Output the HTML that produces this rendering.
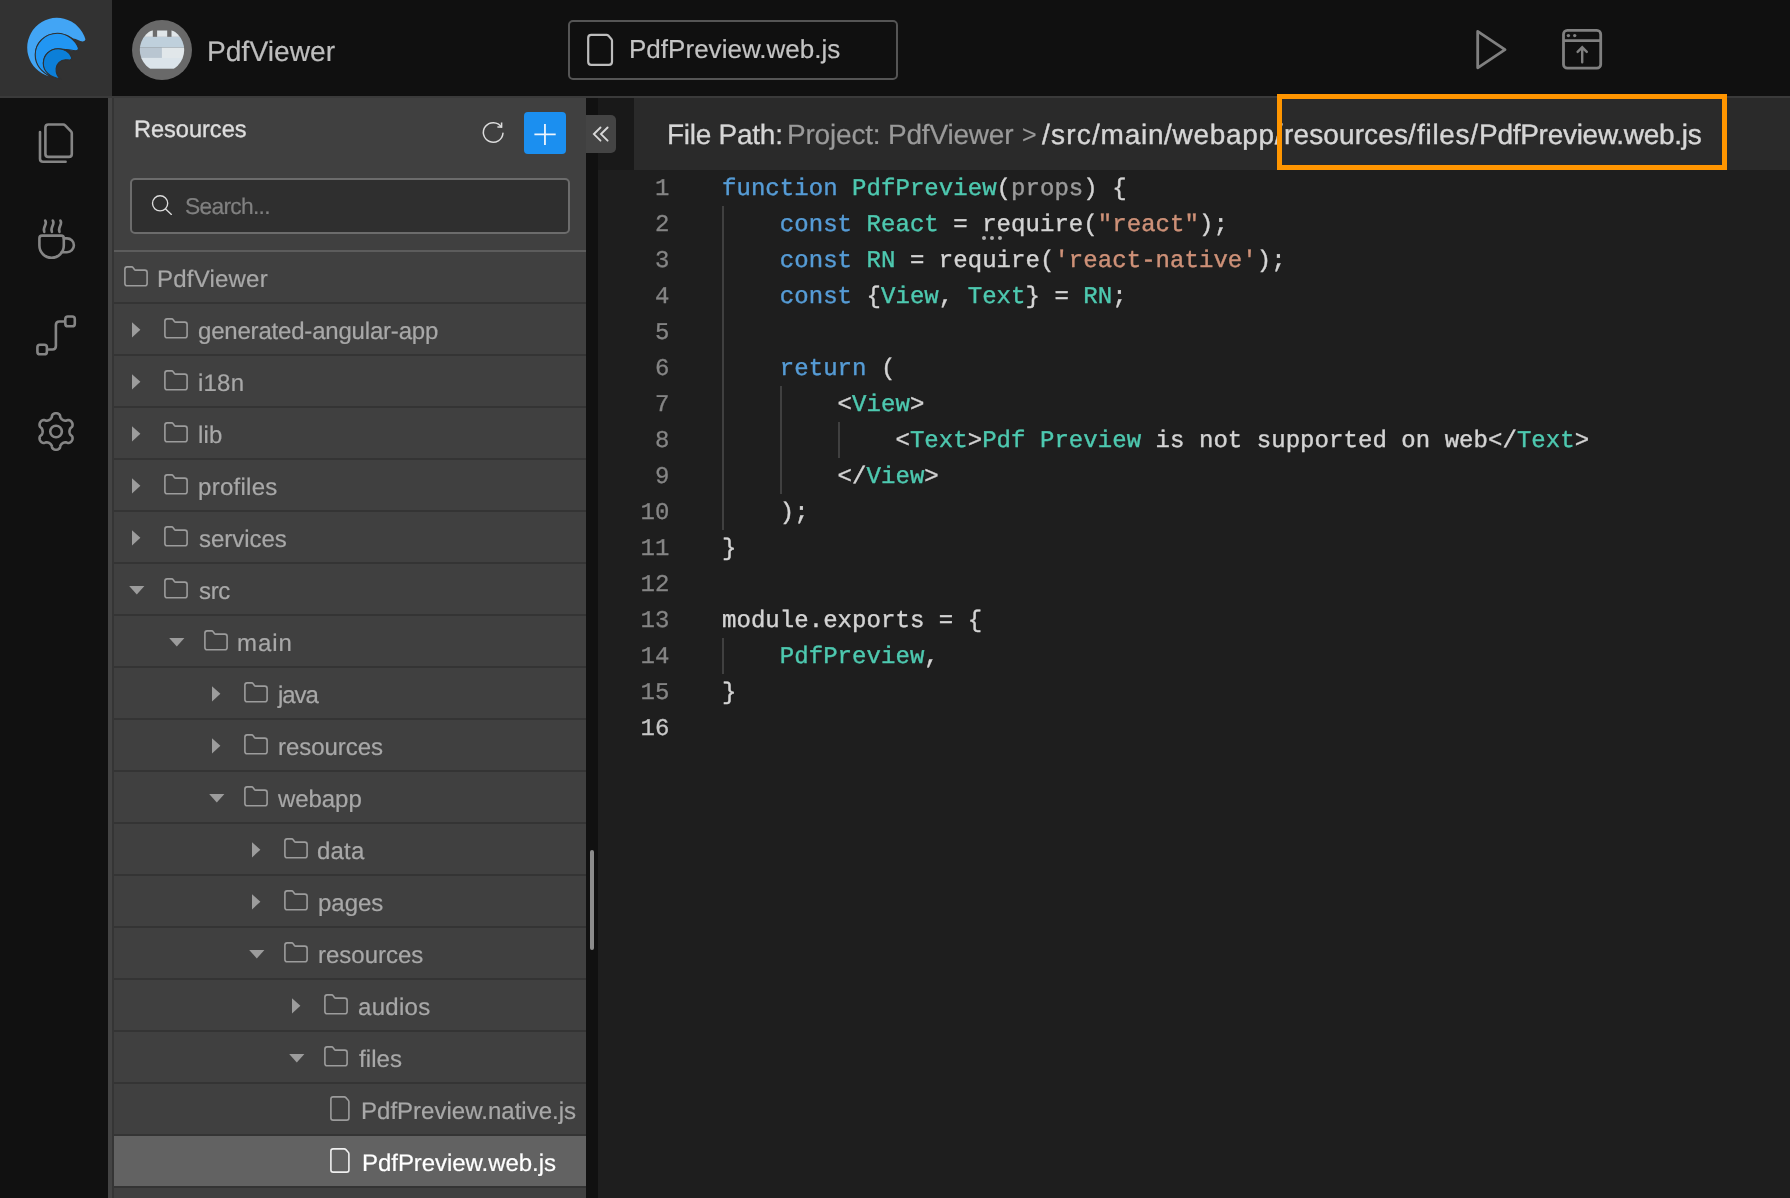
<!DOCTYPE html>
<html><head><meta charset="utf-8"><title>PdfViewer</title><style>
*{margin:0;padding:0;box-sizing:border-box}
html,body{width:1790px;height:1198px;overflow:hidden;background:#101010}
body{position:relative;font-family:"Liberation Sans",sans-serif;-webkit-font-smoothing:antialiased;text-rendering:geometricPrecision}
.tt,.ln,.cl,.fp,.tx{will-change:transform}
.ab{position:absolute;display:block}
.sep{left:114px;width:472px;height:2px;background:#343434}
.tt{font-size:24px;line-height:56px;height:50px;white-space:nowrap;-webkit-text-stroke:0.2px currentColor}
.ln{left:598px;width:71.5px;text-align:right;font-family:"Liberation Mono",monospace;font-size:24px;height:36px;line-height:33px;padding-top:3px;color:#858585;letter-spacing:0.05px;-webkit-text-stroke:0.3px currentColor}
.ln.act{color:#c6c6c6}
.cl{left:722px;font-family:"Liberation Mono",monospace;font-size:24px;height:36px;line-height:33px;padding-top:3px;color:#d4d4d4;white-space:pre;letter-spacing:0.05px;-webkit-text-stroke:0.4px currentColor}
.k{color:#569cd6}.t{color:#4ec9b0}.s{color:#ce9178}.g{color:#9b9b9b}
.fp{-webkit-text-stroke:0.2px currentColor;font-size:28px;line-height:72px;height:72px;white-space:nowrap;top:99px}
</style></head><body>
<div class="ab" style="left:0;top:0;width:1790px;height:96px;background:#101010"></div>
<div class="ab" style="left:0;top:96px;width:1790px;height:2px;background:#3a3a3a"></div>
<div class="ab" style="left:0;top:0;width:112px;height:96px;background:#323232"></div>
<svg class="ab" style="left:0;top:0" width="112" height="96" viewBox="0 0 112 96">
<path d="M85.4 39.2 A29.7 29.7 0 1 0 49 76.2 C40 70 35 62 35 54.7 C35 42 45 33 57.4 33.2 C64 33.2 69 35.5 73.4 38.4 C76.4 38.6 80 41.6 83 41.4 C84.4 41.3 85.5 40.4 85.4 39.2 Z" fill="#42a5f5"/>
<path d="M78.4 48.2 C76 40.3 67 33.2 57.4 33.2 C45 33.2 35.2 43 35.2 54.7 C35.2 64 41 72.4 53 77.6 C45 72 43 66 43.4 62.8 C43.4 55 50 48.7 58.1 48.7 C61 48.7 63.5 49.2 65.4 49.6 C68.4 48.9 72 51 76 50.8 C77.6 50.7 78.6 49.5 78.4 48.2 Z" fill="#2196f3" stroke="#303030" stroke-width="1.1"/>
<path d="M71.6 57.5 C70 52.3 64 48.7 58.1 48.7 C50 48.7 43.3 55 43.3 63.4 C43.3 70.4 49 77.3 60.2 78.8 C57 76 55.9 72 56.1 68.5 C56.5 63.4 60.6 60 65.4 59.7 C67 59.6 68.6 60.1 69.9 60 C71 59.9 71.8 58.7 71.6 57.5 Z" fill="#0c7fd8" stroke="#303030" stroke-width="1.1"/>
</svg>
<svg class="ab" style="left:130px;top:18px" width="64" height="64" viewBox="130 18 64 64">
<defs><clipPath id="av"><circle cx="162" cy="50" r="22.2"/></clipPath></defs>
<circle cx="162" cy="50" r="30" fill="#696969"/>
<g clip-path="url(#av)">
<rect x="138" y="30.5" width="48" height="6.4" fill="#e0e6e9"/>
<rect x="152.8" y="30" width="4.3" height="6.9" fill="#6b6b6b"/>
<rect x="167.2" y="30" width="4.3" height="6.9" fill="#6b6b6b"/>
<rect x="138" y="36.9" width="48" height="10.3" fill="#bfd0dc"/>
<rect x="138" y="47" width="48" height="0.8" fill="#a9b4bc"/>
<rect x="138" y="47.7" width="24" height="10.3" fill="#b9c6d1"/>
<rect x="161.9" y="47.7" width="25" height="10.3" fill="#e1e7ea"/>
<rect x="138" y="57.9" width="48" height="10.8" fill="#dbe4ea"/>
</g></svg>
<div id="title" class="ab tx" style="left:207.5px;top:31px;font-size:28.2px;line-height:40px;color:#bdbdbd;white-space:nowrap;-webkit-text-stroke:0.2px currentColor;letter-spacing:0.032px;margin-left:-0.20px;">PdfViewer</div>
<div class="ab" style="left:568px;top:20px;width:330px;height:60px;border:2px solid #555;border-radius:5px"></div>
<svg class="ab" style="left:586px;top:32px" width="30" height="36" viewBox="586 32 30 36">
<path d="M588.2 38 Q588.2 34.9 591.3 34.9 L606.6 34.9 Q607.6 34.9 608.3 35.6 L611.3 38.9 Q612 39.7 612 40.7 L612 61.8 Q612 64.9 608.9 64.9 L591.3 64.9 Q588.2 64.9 588.2 61.8 Z" fill="none" stroke="#bdbdbd" stroke-width="2.2"/></svg>
<div id="tab" class="ab tx" style="left:631px;top:29px;font-size:26px;line-height:40px;color:#c4c4c4;white-space:nowrap;-webkit-text-stroke:0.2px currentColor;letter-spacing:0.023px;margin-left:-1.80px;">PdfPreview.web.js</div>
<svg class="ab" style="left:1470px;top:24px" width="140" height="52" viewBox="1470 24 140 52">
<path d="M1477.7 31.4 L1505 49.6 L1477.7 67.8 Z" fill="none" stroke="#808080" stroke-width="2.8" stroke-linejoin="round"/>
<rect x="1563.5" y="30.4" width="37.2" height="37.8" rx="3.8" fill="none" stroke="#808080" stroke-width="2.8"/>
<path d="M1563.5 40.6 L1600.7 40.6" stroke="#808080" stroke-width="2.8"/>
<circle cx="1568.4" cy="35.6" r="1.7" fill="#808080"/><circle cx="1574.7" cy="35.6" r="1.7" fill="#808080"/>
<path d="M1582.2 62.2 L1582.2 47.6 M1577.6 51.9 L1582.2 47.3 L1586.8 51.9" fill="none" stroke="#808080" stroke-width="2.4" stroke-linecap="round" stroke-linejoin="miter"/>
</svg>
<div class="ab" style="left:0;top:98px;width:108px;height:1100px;background:#111"></div>
<div class="ab" style="left:108px;top:98px;width:4px;height:1100px;background:#444"></div>
<div class="ab" style="left:112px;top:98px;width:2px;height:1100px;background:#353535"></div>
<svg class="ab" style="left:0;top:98px" width="108" height="400" viewBox="0 98 108 400" fill="none" stroke="#858585" stroke-width="2.6" stroke-linecap="round" stroke-linejoin="round">
<path d="M45.4 127.5 Q45.4 124.5 48.4 124.5 L63.2 124.5 Q64.4 124.5 65.2 125.3 L71 131.3 Q71.8 132.1 71.8 133.3 L71.8 153.9 Q71.8 156.9 68.8 156.9 L48.4 156.9 Q45.4 156.9 45.4 153.9 Z"/>
<path d="M40 132 L40 158.7 Q40 161.7 43 161.7 L65.6 161.7"/>
<path d="M39.4 238.3 Q39.4 235.6 42.1 235.6 L61.1 235.6 Q63.8 235.6 63.8 238.3 L63.8 245.6 A12.2 12.2 0 0 1 39.4 245.6 Z"/>
<path d="M63.8 238.4 L67 238.4 A6.9 6.9 0 0 1 67 252.2 L61.6 252.2"/>
<path d="M45.2 220.6 C48 224 42 227.5 44.3 231.8"/>
<path d="M52.8 220.6 C55.6 224 49.6 227.5 51.9 231.8"/>
<path d="M60.4 220.6 C63.2 224 57.2 227.5 59.5 231.8"/>
<rect x="65.3" y="316.5" width="9.5" height="9.8" rx="2.6"/>
<rect x="37.4" y="344.7" width="9.5" height="9.6" rx="2.6"/>
<path d="M48.2 349.5 L52.4 349.5 Q55.9 349.5 55.9 346 L55.9 325 Q55.9 321.5 59.4 321.5 L64 321.5"/>
<path d="M69.45 431.50 L69.46 431.85 L69.50 432.20 L69.56 432.56 L69.64 432.93 L69.76 433.30 L69.90 433.69 L70.07 434.10 L70.30 434.53 L70.60 434.99 L71.36 435.60 L72.09 436.25 L72.35 436.79 L72.49 437.32 L72.55 437.84 L72.56 438.34 L72.52 438.83 L72.43 439.31 L72.30 439.78 L72.12 440.22 L71.90 440.65 L71.64 441.05 L71.34 441.43 L71.01 441.78 L70.64 442.10 L70.23 442.38 L69.79 442.63 L69.31 442.82 L68.78 442.97 L68.19 443.02 L67.26 442.71 L66.35 442.36 L65.80 442.32 L65.31 442.35 L64.87 442.40 L64.47 442.47 L64.08 442.56 L63.73 442.67 L63.38 442.79 L63.06 442.94 L62.75 443.10 L62.45 443.29 L62.16 443.50 L61.88 443.73 L61.61 443.99 L61.34 444.27 L61.07 444.59 L60.81 444.95 L60.55 445.35 L60.30 445.85 L60.15 446.81 L59.96 447.77 L59.61 448.26 L59.23 448.64 L58.82 448.96 L58.38 449.22 L57.93 449.43 L57.47 449.59 L57.00 449.71 L56.53 449.78 L56.05 449.80 L55.57 449.78 L55.10 449.71 L54.63 449.59 L54.17 449.43 L53.72 449.22 L53.28 448.96 L52.87 448.64 L52.49 448.26 L52.14 447.77 L51.95 446.81 L51.80 445.85 L51.55 445.35 L51.29 444.95 L51.03 444.59 L50.76 444.27 L50.49 443.99 L50.22 443.73 L49.94 443.50 L49.65 443.29 L49.35 443.10 L49.04 442.94 L48.72 442.79 L48.37 442.67 L48.02 442.56 L47.63 442.47 L47.23 442.40 L46.79 442.35 L46.30 442.32 L45.75 442.36 L44.84 442.71 L43.91 443.02 L43.32 442.97 L42.79 442.82 L42.31 442.63 L41.87 442.38 L41.46 442.10 L41.09 441.78 L40.76 441.43 L40.46 441.05 L40.20 440.65 L39.98 440.22 L39.80 439.78 L39.67 439.31 L39.58 438.83 L39.54 438.34 L39.55 437.84 L39.61 437.32 L39.75 436.79 L40.01 436.25 L40.74 435.60 L41.50 434.99 L41.80 434.53 L42.03 434.10 L42.20 433.69 L42.34 433.30 L42.46 432.93 L42.54 432.56 L42.60 432.20 L42.64 431.85 L42.65 431.50 L42.64 431.15 L42.60 430.80 L42.54 430.44 L42.46 430.07 L42.34 429.70 L42.20 429.31 L42.03 428.90 L41.80 428.47 L41.50 428.01 L40.74 427.40 L40.01 426.75 L39.75 426.21 L39.61 425.68 L39.55 425.16 L39.54 424.66 L39.58 424.17 L39.67 423.69 L39.80 423.22 L39.98 422.78 L40.20 422.35 L40.46 421.95 L40.76 421.57 L41.09 421.22 L41.46 420.90 L41.87 420.62 L42.31 420.37 L42.79 420.18 L43.32 420.03 L43.91 419.98 L44.84 420.29 L45.75 420.64 L46.30 420.68 L46.79 420.65 L47.23 420.60 L47.63 420.53 L48.02 420.44 L48.37 420.33 L48.72 420.21 L49.04 420.06 L49.35 419.90 L49.65 419.71 L49.94 419.50 L50.22 419.27 L50.49 419.01 L50.76 418.73 L51.03 418.41 L51.29 418.05 L51.55 417.65 L51.80 417.15 L51.95 416.19 L52.14 415.23 L52.49 414.74 L52.87 414.36 L53.28 414.04 L53.72 413.78 L54.17 413.57 L54.63 413.41 L55.10 413.29 L55.57 413.22 L56.05 413.20 L56.53 413.22 L57.00 413.29 L57.47 413.41 L57.93 413.57 L58.38 413.78 L58.82 414.04 L59.23 414.36 L59.61 414.74 L59.96 415.23 L60.15 416.19 L60.30 417.15 L60.55 417.65 L60.81 418.05 L61.07 418.41 L61.34 418.73 L61.61 419.01 L61.88 419.27 L62.16 419.50 L62.45 419.71 L62.75 419.90 L63.06 420.06 L63.38 420.21 L63.73 420.33 L64.08 420.44 L64.47 420.53 L64.87 420.60 L65.31 420.65 L65.80 420.68 L66.35 420.64 L67.26 420.29 L68.19 419.98 L68.78 420.03 L69.31 420.18 L69.79 420.37 L70.23 420.62 L70.64 420.90 L71.01 421.22 L71.34 421.57 L71.64 421.95 L71.90 422.35 L72.12 422.78 L72.30 423.22 L72.43 423.69 L72.52 424.17 L72.56 424.66 L72.55 425.16 L72.49 425.68 L72.35 426.21 L72.09 426.75 L71.36 427.40 L70.60 428.01 L70.30 428.47 L70.07 428.90 L69.90 429.31 L69.76 429.70 L69.64 430.07 L69.56 430.44 L69.50 430.80 L69.46 431.15 Z"/>
<circle cx="56.05" cy="431.5" r="5.8"/>
</svg>
<div class="ab" style="left:114px;top:98px;width:472px;height:1100px;background:#404040"></div>
<div id="res" class="ab tx" style="left:134px;top:110px;font-size:23.6px;line-height:40px;color:#dedede;white-space:nowrap;-webkit-text-stroke:0.35px #dedede;letter-spacing:-0.032px;margin-left:-0.08px;">Resources</div>
<svg class="ab" style="left:478px;top:116px" width="32" height="32" viewBox="478 116 32 32" fill="none" stroke="#dcdcdc" stroke-width="1.5" stroke-linecap="round" stroke-linejoin="round">
<path d="M502.95 133.2 A9.8 9.8 0 1 1 501.35 127.05"/>
<path d="M501.6 122.6 L501.6 127 L497.4 127" stroke-linecap="butt" stroke-linejoin="miter"/></svg>
<div class="ab" style="left:524px;top:112px;width:42px;height:42px;background:#1b8ff0;border-radius:4px"></div>
<svg class="ab" style="left:530px;top:118px" width="32" height="32" viewBox="530 118 32 32"><path d="M534.4 134.4 L555.7 134.4 M544.95 123.9 L544.95 145" stroke="#eef5fd" stroke-width="1.8" fill="none"/></svg>
<div class="ab" style="left:130px;top:178px;width:440px;height:56px;border:2px solid #6c6c6c;border-radius:5px;background:#2f2f2f"></div>
<svg class="ab" style="left:148px;top:192px" width="28" height="28" viewBox="148 192 28 28" fill="none" stroke="#dcdcdc" stroke-width="1.35" stroke-linecap="round">
<circle cx="160.1" cy="203.3" r="7.6"/><path d="M165.6 208.9 L171.4 214.4"/></svg>
<div id="search" class="ab tx" style="left:185.5px;top:186px;font-size:22.8px;line-height:40px;color:#808080;white-space:nowrap;-webkit-text-stroke:0.2px currentColor;letter-spacing:-0.720px;margin-left:-0.40px;">Search...</div>
<div class="ab" style="left:114px;top:250px;width:472px;height:2px;background:#5c5c5c"></div>
<div class="ab sep" style="top:302px"></div>
<svg class="ab" style="left:124px;top:266.2px" width="25" height="22" viewBox="0 0 25 22"><path d="M0.9 3.2 Q0.9 0.9 3.2 0.9 L7.6 0.9 Q8.6 0.9 9.2 1.8 L10.4 3.5 Q10.8 4.1 11.6 4.1 L20.8 4.1 Q23.1 4.1 23.1 6.4 L23.1 17.5 Q23.1 19.8 20.8 19.8 L3.2 19.8 Q0.9 19.8 0.9 17.5 Z" fill="none" stroke="#9c9c9c" stroke-width="1.6"/></svg>
<div id="t0" class="ab tt" style="left:159.0px;top:252px;color:#a8a8a8;letter-spacing:0.213px;margin-left:-2.08px;">PdfViewer</div>
<div class="ab sep" style="top:354px"></div>
<svg class="ab" style="left:132px;top:322.2px" width="9" height="16" viewBox="0 0 9 16"><path d="M0 0.2 L8.4 7.8 L0 15.4 Z" fill="#9c9c9c"/></svg>
<svg class="ab" style="left:164px;top:318.2px" width="25" height="22" viewBox="0 0 25 22"><path d="M0.9 3.2 Q0.9 0.9 3.2 0.9 L7.6 0.9 Q8.6 0.9 9.2 1.8 L10.4 3.5 Q10.8 4.1 11.6 4.1 L20.8 4.1 Q23.1 4.1 23.1 6.4 L23.1 17.5 Q23.1 19.8 20.8 19.8 L3.2 19.8 Q0.9 19.8 0.9 17.5 Z" fill="none" stroke="#9c9c9c" stroke-width="1.6"/></svg>
<div id="t1" class="ab tt" style="left:198.0px;top:304px;color:#a8a8a8;letter-spacing:-0.193px;margin-left:-0.00px;">generated-angular-app</div>
<div class="ab sep" style="top:406px"></div>
<svg class="ab" style="left:132px;top:374.2px" width="9" height="16" viewBox="0 0 9 16"><path d="M0 0.2 L8.4 7.8 L0 15.4 Z" fill="#9c9c9c"/></svg>
<svg class="ab" style="left:164px;top:370.2px" width="25" height="22" viewBox="0 0 25 22"><path d="M0.9 3.2 Q0.9 0.9 3.2 0.9 L7.6 0.9 Q8.6 0.9 9.2 1.8 L10.4 3.5 Q10.8 4.1 11.6 4.1 L20.8 4.1 Q23.1 4.1 23.1 6.4 L23.1 17.5 Q23.1 19.8 20.8 19.8 L3.2 19.8 Q0.9 19.8 0.9 17.5 Z" fill="none" stroke="#9c9c9c" stroke-width="1.6"/></svg>
<div id="t2" class="ab tt" style="left:198.0px;top:356px;color:#a8a8a8;letter-spacing:0.220px;margin-left:0.28px;">i18n</div>
<div class="ab sep" style="top:458px"></div>
<svg class="ab" style="left:132px;top:426.2px" width="9" height="16" viewBox="0 0 9 16"><path d="M0 0.2 L8.4 7.8 L0 15.4 Z" fill="#9c9c9c"/></svg>
<svg class="ab" style="left:164px;top:422.2px" width="25" height="22" viewBox="0 0 25 22"><path d="M0.9 3.2 Q0.9 0.9 3.2 0.9 L7.6 0.9 Q8.6 0.9 9.2 1.8 L10.4 3.5 Q10.8 4.1 11.6 4.1 L20.8 4.1 Q23.1 4.1 23.1 6.4 L23.1 17.5 Q23.1 19.8 20.8 19.8 L3.2 19.8 Q0.9 19.8 0.9 17.5 Z" fill="none" stroke="#9c9c9c" stroke-width="1.6"/></svg>
<div id="t3" class="ab tt" style="left:198.0px;top:408px;color:#a8a8a8;letter-spacing:0.195px;margin-left:-0.40px;">lib</div>
<div class="ab sep" style="top:510px"></div>
<svg class="ab" style="left:132px;top:478.2px" width="9" height="16" viewBox="0 0 9 16"><path d="M0 0.2 L8.4 7.8 L0 15.4 Z" fill="#9c9c9c"/></svg>
<svg class="ab" style="left:164px;top:474.2px" width="25" height="22" viewBox="0 0 25 22"><path d="M0.9 3.2 Q0.9 0.9 3.2 0.9 L7.6 0.9 Q8.6 0.9 9.2 1.8 L10.4 3.5 Q10.8 4.1 11.6 4.1 L20.8 4.1 Q23.1 4.1 23.1 6.4 L23.1 17.5 Q23.1 19.8 20.8 19.8 L3.2 19.8 Q0.9 19.8 0.9 17.5 Z" fill="none" stroke="#9c9c9c" stroke-width="1.6"/></svg>
<div id="t4" class="ab tt" style="left:198.0px;top:460px;color:#a8a8a8;letter-spacing:0.280px;margin-left:0.08px;">profiles</div>
<div class="ab sep" style="top:562px"></div>
<svg class="ab" style="left:132px;top:530.2px" width="9" height="16" viewBox="0 0 9 16"><path d="M0 0.2 L8.4 7.8 L0 15.4 Z" fill="#9c9c9c"/></svg>
<svg class="ab" style="left:164px;top:526.2px" width="25" height="22" viewBox="0 0 25 22"><path d="M0.9 3.2 Q0.9 0.9 3.2 0.9 L7.6 0.9 Q8.6 0.9 9.2 1.8 L10.4 3.5 Q10.8 4.1 11.6 4.1 L20.8 4.1 Q23.1 4.1 23.1 6.4 L23.1 17.5 Q23.1 19.8 20.8 19.8 L3.2 19.8 Q0.9 19.8 0.9 17.5 Z" fill="none" stroke="#9c9c9c" stroke-width="1.6"/></svg>
<div id="t5" class="ab tt" style="left:198.0px;top:512px;color:#a8a8a8;letter-spacing:-0.028px;margin-left:0.72px;">services</div>
<div class="ab sep" style="top:614px"></div>
<svg class="ab" style="left:128.5px;top:585.8px" width="16" height="9" viewBox="0 0 16 9"><path d="M0.2 0 L15.4 0 L7.8 8.4 Z" fill="#9c9c9c"/></svg>
<svg class="ab" style="left:164px;top:578.2px" width="25" height="22" viewBox="0 0 25 22"><path d="M0.9 3.2 Q0.9 0.9 3.2 0.9 L7.6 0.9 Q8.6 0.9 9.2 1.8 L10.4 3.5 Q10.8 4.1 11.6 4.1 L20.8 4.1 Q23.1 4.1 23.1 6.4 L23.1 17.5 Q23.1 19.8 20.8 19.8 L3.2 19.8 Q0.9 19.8 0.9 17.5 Z" fill="none" stroke="#9c9c9c" stroke-width="1.6"/></svg>
<div id="t6" class="ab tt" style="left:198.0px;top:564px;color:#a8a8a8;letter-spacing:-0.320px;margin-left:0.72px;">src</div>
<div class="ab sep" style="top:666px"></div>
<svg class="ab" style="left:168.5px;top:637.8px" width="16" height="9" viewBox="0 0 16 9"><path d="M0.2 0 L15.4 0 L7.8 8.4 Z" fill="#9c9c9c"/></svg>
<svg class="ab" style="left:204px;top:630.2px" width="25" height="22" viewBox="0 0 25 22"><path d="M0.9 3.2 Q0.9 0.9 3.2 0.9 L7.6 0.9 Q8.6 0.9 9.2 1.8 L10.4 3.5 Q10.8 4.1 11.6 4.1 L20.8 4.1 Q23.1 4.1 23.1 6.4 L23.1 17.5 Q23.1 19.8 20.8 19.8 L3.2 19.8 Q0.9 19.8 0.9 17.5 Z" fill="none" stroke="#9c9c9c" stroke-width="1.6"/></svg>
<div id="t7" class="ab tt" style="left:238.0px;top:616px;color:#a8a8a8;letter-spacing:0.931px;margin-left:-0.68px;">main</div>
<div class="ab sep" style="top:718px"></div>
<svg class="ab" style="left:212px;top:686.2px" width="9" height="16" viewBox="0 0 9 16"><path d="M0 0.2 L8.4 7.8 L0 15.4 Z" fill="#9c9c9c"/></svg>
<svg class="ab" style="left:244px;top:682.2px" width="25" height="22" viewBox="0 0 25 22"><path d="M0.9 3.2 Q0.9 0.9 3.2 0.9 L7.6 0.9 Q8.6 0.9 9.2 1.8 L10.4 3.5 Q10.8 4.1 11.6 4.1 L20.8 4.1 Q23.1 4.1 23.1 6.4 L23.1 17.5 Q23.1 19.8 20.8 19.8 L3.2 19.8 Q0.9 19.8 0.9 17.5 Z" fill="none" stroke="#9c9c9c" stroke-width="1.6"/></svg>
<div id="t8" class="ab tt" style="left:278.0px;top:668px;color:#a8a8a8;letter-spacing:-1.082px;margin-left:0.40px;">java</div>
<div class="ab sep" style="top:770px"></div>
<svg class="ab" style="left:212px;top:738.2px" width="9" height="16" viewBox="0 0 9 16"><path d="M0 0.2 L8.4 7.8 L0 15.4 Z" fill="#9c9c9c"/></svg>
<svg class="ab" style="left:244px;top:734.2px" width="25" height="22" viewBox="0 0 25 22"><path d="M0.9 3.2 Q0.9 0.9 3.2 0.9 L7.6 0.9 Q8.6 0.9 9.2 1.8 L10.4 3.5 Q10.8 4.1 11.6 4.1 L20.8 4.1 Q23.1 4.1 23.1 6.4 L23.1 17.5 Q23.1 19.8 20.8 19.8 L3.2 19.8 Q0.9 19.8 0.9 17.5 Z" fill="none" stroke="#9c9c9c" stroke-width="1.6"/></svg>
<div id="t9" class="ab tt" style="left:278.0px;top:720px;color:#a8a8a8;letter-spacing:-0.043px;margin-left:0.12px;">resources</div>
<div class="ab sep" style="top:822px"></div>
<svg class="ab" style="left:208.5px;top:793.8px" width="16" height="9" viewBox="0 0 16 9"><path d="M0.2 0 L15.4 0 L7.8 8.4 Z" fill="#9c9c9c"/></svg>
<svg class="ab" style="left:244px;top:786.2px" width="25" height="22" viewBox="0 0 25 22"><path d="M0.9 3.2 Q0.9 0.9 3.2 0.9 L7.6 0.9 Q8.6 0.9 9.2 1.8 L10.4 3.5 Q10.8 4.1 11.6 4.1 L20.8 4.1 Q23.1 4.1 23.1 6.4 L23.1 17.5 Q23.1 19.8 20.8 19.8 L3.2 19.8 Q0.9 19.8 0.9 17.5 Z" fill="none" stroke="#9c9c9c" stroke-width="1.6"/></svg>
<div id="t10" class="ab tt" style="left:278.0px;top:772px;color:#a8a8a8;letter-spacing:-0.066px;margin-left:0.40px;">webapp</div>
<div class="ab sep" style="top:874px"></div>
<svg class="ab" style="left:252px;top:842.2px" width="9" height="16" viewBox="0 0 9 16"><path d="M0 0.2 L8.4 7.8 L0 15.4 Z" fill="#9c9c9c"/></svg>
<svg class="ab" style="left:284px;top:838.2px" width="25" height="22" viewBox="0 0 25 22"><path d="M0.9 3.2 Q0.9 0.9 3.2 0.9 L7.6 0.9 Q8.6 0.9 9.2 1.8 L10.4 3.5 Q10.8 4.1 11.6 4.1 L20.8 4.1 Q23.1 4.1 23.1 6.4 L23.1 17.5 Q23.1 19.8 20.8 19.8 L3.2 19.8 Q0.9 19.8 0.9 17.5 Z" fill="none" stroke="#9c9c9c" stroke-width="1.6"/></svg>
<div id="t11" class="ab tt" style="left:318.0px;top:824px;color:#a8a8a8;letter-spacing:0.195px;margin-left:-0.60px;">data</div>
<div class="ab sep" style="top:926px"></div>
<svg class="ab" style="left:252px;top:894.2px" width="9" height="16" viewBox="0 0 9 16"><path d="M0 0.2 L8.4 7.8 L0 15.4 Z" fill="#9c9c9c"/></svg>
<svg class="ab" style="left:284px;top:890.2px" width="25" height="22" viewBox="0 0 25 22"><path d="M0.9 3.2 Q0.9 0.9 3.2 0.9 L7.6 0.9 Q8.6 0.9 9.2 1.8 L10.4 3.5 Q10.8 4.1 11.6 4.1 L20.8 4.1 Q23.1 4.1 23.1 6.4 L23.1 17.5 Q23.1 19.8 20.8 19.8 L3.2 19.8 Q0.9 19.8 0.9 17.5 Z" fill="none" stroke="#9c9c9c" stroke-width="1.6"/></svg>
<div id="t12" class="ab tt" style="left:318.0px;top:876px;color:#a8a8a8;letter-spacing:-0.027px;margin-left:-0.32px;">pages</div>
<div class="ab sep" style="top:978px"></div>
<svg class="ab" style="left:248.5px;top:949.8px" width="16" height="9" viewBox="0 0 16 9"><path d="M0.2 0 L15.4 0 L7.8 8.4 Z" fill="#9c9c9c"/></svg>
<svg class="ab" style="left:284px;top:942.2px" width="25" height="22" viewBox="0 0 25 22"><path d="M0.9 3.2 Q0.9 0.9 3.2 0.9 L7.6 0.9 Q8.6 0.9 9.2 1.8 L10.4 3.5 Q10.8 4.1 11.6 4.1 L20.8 4.1 Q23.1 4.1 23.1 6.4 L23.1 17.5 Q23.1 19.8 20.8 19.8 L3.2 19.8 Q0.9 19.8 0.9 17.5 Z" fill="none" stroke="#9c9c9c" stroke-width="1.6"/></svg>
<div id="t13" class="ab tt" style="left:318.0px;top:928px;color:#a8a8a8;letter-spacing:-0.001px;margin-left:-0.48px;">resources</div>
<div class="ab sep" style="top:1030px"></div>
<svg class="ab" style="left:292px;top:998.2px" width="9" height="16" viewBox="0 0 9 16"><path d="M0 0.2 L8.4 7.8 L0 15.4 Z" fill="#9c9c9c"/></svg>
<svg class="ab" style="left:324px;top:994.2px" width="25" height="22" viewBox="0 0 25 22"><path d="M0.9 3.2 Q0.9 0.9 3.2 0.9 L7.6 0.9 Q8.6 0.9 9.2 1.8 L10.4 3.5 Q10.8 4.1 11.6 4.1 L20.8 4.1 Q23.1 4.1 23.1 6.4 L23.1 17.5 Q23.1 19.8 20.8 19.8 L3.2 19.8 Q0.9 19.8 0.9 17.5 Z" fill="none" stroke="#9c9c9c" stroke-width="1.6"/></svg>
<div id="t14" class="ab tt" style="left:358.0px;top:980px;color:#a8a8a8;letter-spacing:0.288px;margin-left:-0.20px;">audios</div>
<div class="ab sep" style="top:1082px"></div>
<svg class="ab" style="left:288.5px;top:1053.8px" width="16" height="9" viewBox="0 0 16 9"><path d="M0.2 0 L15.4 0 L7.8 8.4 Z" fill="#9c9c9c"/></svg>
<svg class="ab" style="left:324px;top:1046.2px" width="25" height="22" viewBox="0 0 25 22"><path d="M0.9 3.2 Q0.9 0.9 3.2 0.9 L7.6 0.9 Q8.6 0.9 9.2 1.8 L10.4 3.5 Q10.8 4.1 11.6 4.1 L20.8 4.1 Q23.1 4.1 23.1 6.4 L23.1 17.5 Q23.1 19.8 20.8 19.8 L3.2 19.8 Q0.9 19.8 0.9 17.5 Z" fill="none" stroke="#9c9c9c" stroke-width="1.6"/></svg>
<div id="t15" class="ab tt" style="left:358.0px;top:1032px;color:#a8a8a8;letter-spacing:0.074px;margin-left:0.80px;">files</div>
<div class="ab sep" style="top:1134px"></div>
<svg class="ab" style="left:330px;top:1096.3px" width="21" height="26" viewBox="0 0 21 26"><path d="M0.9 3.1 Q0.9 0.9 3.1 0.9 L14.2 0.9 Q15.2 0.9 15.9 1.6 L18.2 4.2 Q18.9 5 18.9 6 L18.9 21.9 Q18.9 24.1 16.7 24.1 L3.1 24.1 Q0.9 24.1 0.9 21.9 Z" fill="none" stroke="#9c9c9c" stroke-width="1.6"/></svg>
<div id="t16" class="ab tt" style="left:362.0px;top:1084px;color:#a8a8a8;letter-spacing:0.017px;margin-left:-1.28px;">PdfPreview.native.js</div>
<div class="ab" style="left:114px;top:1136px;width:472px;height:50px;background:#626262"></div>
<div class="ab sep" style="top:1186px"></div>
<svg class="ab" style="left:330px;top:1148.3px" width="21" height="26" viewBox="0 0 21 26"><path d="M0.9 3.1 Q0.9 0.9 3.1 0.9 L14.2 0.9 Q15.2 0.9 15.9 1.6 L18.2 4.2 Q18.9 5 18.9 6 L18.9 21.9 Q18.9 24.1 16.7 24.1 L3.1 24.1 Q0.9 24.1 0.9 21.9 Z" fill="none" stroke="#f0f0f0" stroke-width="1.6"/></svg>
<div id="t17" class="ab tt" style="left:362.0px;top:1136px;color:#ffffff;letter-spacing:-0.048px;margin-left:-0.20px;">PdfPreview.web.js</div>
<div class="ab" style="left:586px;top:98px;width:12px;height:1100px;background:#111"></div>
<div class="ab" style="left:590px;top:850px;width:4px;height:100px;background:#8c8c8c;border-radius:2px"></div>
<div class="ab" style="left:598px;top:98px;width:1192px;height:1100px;background:#1e1e1e"></div>
<div class="ab" style="left:598px;top:98px;width:36px;height:72px;background:#191919"></div>
<div class="ab" style="left:634px;top:98px;width:1156px;height:72px;background:#2a2a2a"></div>
<div class="ab" style="left:586px;top:115px;width:30px;height:38px;background:#444;border-radius:0 5px 5px 0"></div>
<svg class="ab" style="left:588px;top:120px" width="26" height="28" viewBox="588 120 26 28" fill="none" stroke="#d8d8d8" stroke-width="1.9" stroke-linecap="round" stroke-linejoin="miter">
<path d="M600.5 127.5 L593.9 134.1 L600.5 140.7"/><path d="M607.6 127.5 L601 134.1 L607.6 140.7"/></svg>
<div id="fp1" class="ab fp" style="left:667.5px;color:#d6d6d6;-webkit-text-stroke:0.3px #d6d6d6;letter-spacing:-0.262px;margin-left:-0.52px;">File Path:</div>
<div id="fp2" class="ab fp" style="left:788.5px;color:#9a9a9a;letter-spacing:-0.193px;margin-left:-1.36px;">Project: PdfViewer</div>
<div id="fp3" class="ab fp" style="left:1021px;font-size:25px;color:#9a9a9a;letter-spacing:0.000px;margin-left:0.68px;">&gt;</div>
<div id="fp4" class="ab fp" style="left:1042px;color:#d6d6d6;-webkit-text-stroke:0.4px #d6d6d6;letter-spacing:1.241px;margin-left:0.48px;">/src</div>
<div id="fp4b" class="ab fp" style="left:1092px;color:#d6d6d6;-webkit-text-stroke:0.4px #d6d6d6;letter-spacing:0.791px;margin-left:0.08px;">/main</div>
<div id="fp4c" class="ab fp" style="left:1164px;color:#d6d6d6;-webkit-text-stroke:0.4px #d6d6d6;letter-spacing:0.709px;margin-left:0.08px;">/webapp/</div>
<div id="fp5" class="ab fp" style="left:1285px;color:#d6d6d6;-webkit-text-stroke:0.4px #d6d6d6;letter-spacing:0.125px;margin-left:-0.72px;">resources/</div>
<div id="fp6" class="ab fp" style="left:1416px;color:#d6d6d6;-webkit-text-stroke:0.4px #d6d6d6;letter-spacing:0.704px;margin-left:0.68px;">files/</div>
<div id="fp7" class="ab fp" style="left:1480px;color:#d6d6d6;-webkit-text-stroke:0.4px #d6d6d6;letter-spacing:-0.277px;margin-left:-1.12px;">PdfPreview.web.js</div>
<div class="ab obox" style="left:1277px;top:94px;width:450px;height:76px;border:5px solid #ff9500"></div>
<div class="ab ln" style="top:170px">1</div>
<div class="ab cl" style="top:170px"><span class="k">function</span> <span class="t">PdfPreview</span>(<span class="g">props</span>) {</div>
<div class="ab ln" style="top:206px">2</div>
<div class="ab cl" style="top:206px">    <span class="k">const</span> <span class="t">React</span> = require(<span class="s">"react"</span>);</div>
<div class="ab ln" style="top:242px">3</div>
<div class="ab cl" style="top:242px">    <span class="k">const</span> <span class="t">RN</span> = require(<span class="s">'react-native'</span>);</div>
<div class="ab ln" style="top:278px">4</div>
<div class="ab cl" style="top:278px">    <span class="k">const</span> {<span class="t">View</span>, <span class="t">Text</span>} = <span class="t">RN</span>;</div>
<div class="ab ln" style="top:314px">5</div>
<div class="ab ln" style="top:350px">6</div>
<div class="ab cl" style="top:350px">    <span class="k">return</span> (</div>
<div class="ab ln" style="top:386px">7</div>
<div class="ab cl" style="top:386px">        &lt;<span class="t">View</span>&gt;</div>
<div class="ab ln" style="top:422px">8</div>
<div class="ab cl" style="top:422px">            &lt;<span class="t">Text</span>&gt;<span class="t">Pdf Preview</span> is not supported on web&lt;/<span class="t">Text</span>&gt;</div>
<div class="ab ln" style="top:458px">9</div>
<div class="ab cl" style="top:458px">        &lt;/<span class="t">View</span>&gt;</div>
<div class="ab ln" style="top:494px">10</div>
<div class="ab cl" style="top:494px">    );</div>
<div class="ab ln" style="top:530px">11</div>
<div class="ab cl" style="top:530px">}</div>
<div class="ab ln" style="top:566px">12</div>
<div class="ab ln" style="top:602px">13</div>
<div class="ab cl" style="top:602px">module.exports = {</div>
<div class="ab ln" style="top:638px">14</div>
<div class="ab cl" style="top:638px">    <span class="t">PdfPreview</span>,</div>
<div class="ab ln" style="top:674px">15</div>
<div class="ab cl" style="top:674px">}</div>
<div class="ab ln act" style="top:710px">16</div>
<div class="ab" style="left:722px;top:206px;width:2px;height:324px;background:#404040"></div>
<div class="ab" style="left:722px;top:638px;width:2px;height:36px;background:#404040"></div>
<div class="ab" style="left:780px;top:386px;width:2px;height:108px;background:#404040"></div>
<div class="ab" style="left:838px;top:422px;width:2px;height:36px;background:#404040"></div>
<div class="ab" style="left:981.9px;top:236.1px;width:4px;height:4px;border-radius:50%;background:#b0b0b0"></div>
<div class="ab" style="left:989.9px;top:236.1px;width:4px;height:4px;border-radius:50%;background:#b0b0b0"></div>
<div class="ab" style="left:997.9px;top:236.1px;width:4px;height:4px;border-radius:50%;background:#b0b0b0"></div>
</body></html>
